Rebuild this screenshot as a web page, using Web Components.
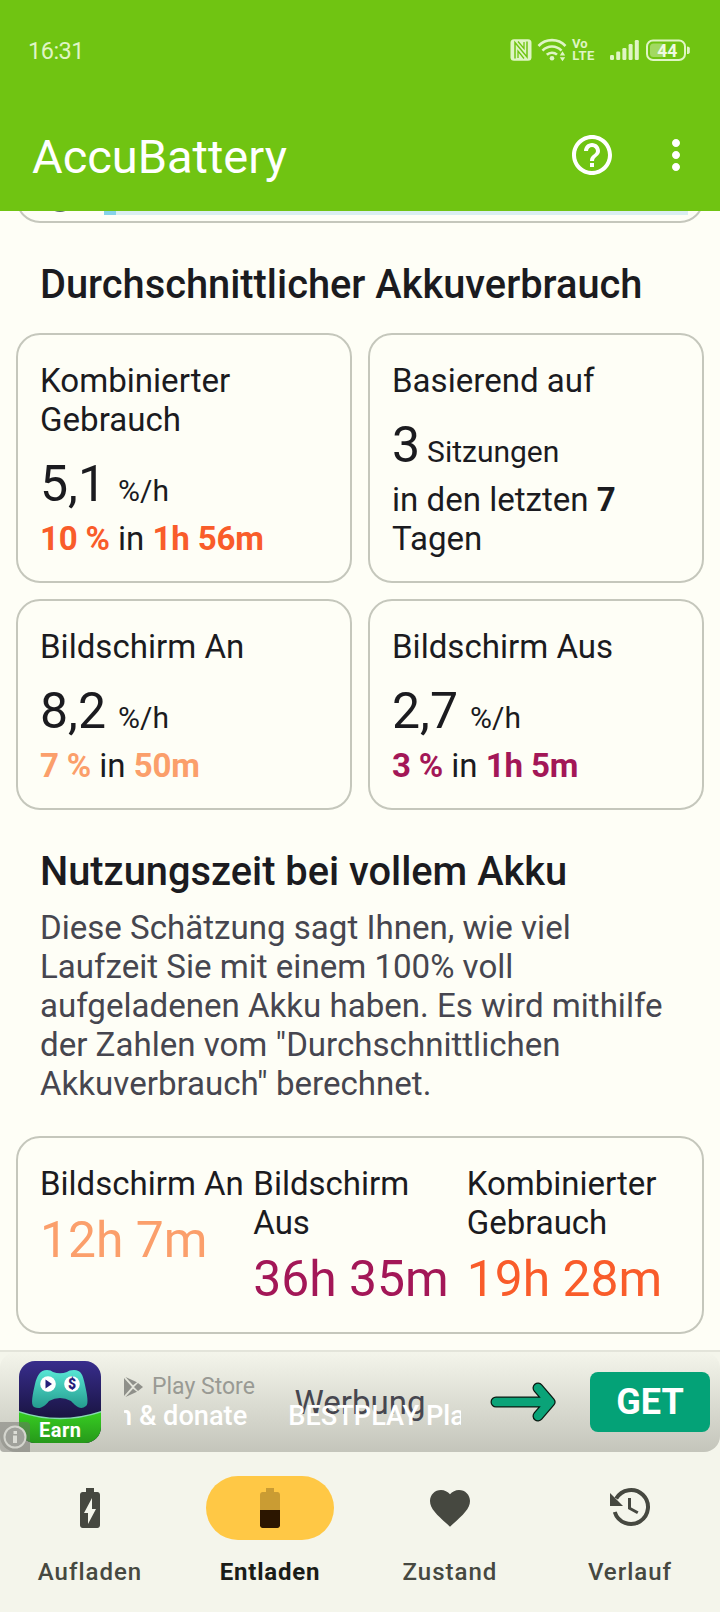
<!DOCTYPE html>
<html lang="de">
<head>
<meta charset="utf-8">
<title>AccuBattery</title>
<style>
  body {
    margin: 0;
    font-family: Roboto, "Noto Sans", sans-serif;
    color: #1b1b1f;
    background: #fefef6;
  }

  usage-card b {
    letter-spacing: -.2px;
  }
</style>
</head>
<body>
<accu-app>
  <status-bar slot="top" time="16:31"></status-bar>
  <app-bar slot="top">AccuBattery</app-bar>

  <previous-card></previous-card>

  <section-title>Durchschnittlicher Akkuverbrauch</section-title>
  <card-grid>
    <usage-card value="5,1" unit="%/h">
      <span slot="label">Kombinierter Gebrauch</span>
      <b style="color:#f95c2a">10 %</b> in <b style="color:#f95c2a">1h 56m</b>
    </usage-card>
    <usage-card value="3" unit="Sitzungen" tight>
      <span slot="label">Basierend auf</span>
      in den letzten <b>7</b> Tagen
    </usage-card>
    <usage-card value="8,2" unit="%/h">
      <span slot="label">Bildschirm An</span>
      <b style="color:#fb9f6b">7 %</b> in <b style="color:#fb9f6b">50m</b>
    </usage-card>
    <usage-card value="2,7" unit="%/h">
      <span slot="label">Bildschirm Aus</span>
      <b style="color:#a31757">3 %</b> in <b style="color:#a31757">1h 5m</b>
    </usage-card>
  </card-grid>

  <section-title>Nutzungszeit bei vollem Akku
    <span slot="text">Diese Schätzung sagt Ihnen, wie viel Laufzeit Sie mit einem 100% voll aufgeladenen Akku haben. Es wird mithilfe der Zahlen vom "Durchschnittlichen Akkuverbrauch" berechnet.</span>
  </section-title>
  <estimate-card>
    <time-estimate label="Bildschirm An" style="color:#fb9f6b">12h 7m</time-estimate>
    <time-estimate label="Bildschirm Aus" style="color:#a31757">36h 35m</time-estimate>
    <time-estimate label="Kombinierter Gebrauch" style="color:#f95c2a">19h 28m</time-estimate>
  </estimate-card>

  <ad-banner slot="bottom"></ad-banner>
  <nav-bar slot="bottom">
    <nav-item icon="charge">Aufladen</nav-item>
    <nav-item icon="discharge" active>Entladen</nav-item>
    <nav-item icon="health">Zustand</nav-item>
    <nav-item icon="history">Verlauf</nav-item>
  </nav-bar>
</accu-app>

<script>
/**
 * Base class that renders the markup of a component into an open shadow root.
 */
class AccuElement extends HTMLElement {
  /**
   * Attach the shadow root and fill it.
   */
  connectedCallback () {
    if (this.shadowRoot) return
    const template = document.createElement('template')
    template.innerHTML = this.render()
    this.attachShadow({ mode: 'open' })
    this.shadowRoot.appendChild(template.content.cloneNode(true))
  }
}

// The screen: fixed top and bottom areas, content in between.
customElements.define('accu-app', class extends AccuElement {
  render () {
    return `
      <style>
        :host { display: flex; flex-direction: column; height: 1612px; overflow: hidden; }
        header { height: 211px; background: #70c412; flex: none; }
        main { flex: 1; min-height: 0; overflow: hidden; }
        footer { flex: none; background: #f4f5eb; }
      </style>
      <header><slot name="top"></slot></header>
      <main><slot></slot></main>
      <footer><slot name="bottom"></slot></footer>
    `
  }
})

customElements.define('status-bar', class extends AccuElement {
  render () {
    return `
      <style>
        :host { display: flex; justify-content: space-between; align-items: center; height: 100px; padding: 0 30px 0 28px; box-sizing: border-box; color: #dff5c4; }
        .time { font-size: 23.5px; line-height: 28px; letter-spacing: -.5px; padding-top: 1px; }
        svg { display: block; margin-top: -1px; }
        text { font-family: Roboto, sans-serif; }
      </style>
      <span class="time">${this.getAttribute('time')}</span>
      <svg width="182" height="26" viewBox="508 36 182 26" fill="currentColor">
        <rect x="510.500" y="38.300" width="21" height="21.400" rx="3.500"/>
        <path d="M515 57.500V41.500L527 56V40.500" fill="none" stroke="#70c412" stroke-width="1.500"/>
        <path d="M518 40.500L524 47.500V41M518 57V50L524 57.500" fill="none" stroke="#70c412" stroke-width="1.300"/>
        <g fill="none" stroke="currentColor" stroke-width="2.600">
          <path d="M538.500 45A18.500 18.500 0 0 1 565.500 45"/>
          <path d="M542.500 49.600A13 13 0 0 1 561.500 49.600"/>
          <path d="M546.800 53.800A7.500 7.500 0 0 1 557 53.600"/>
        </g>
        <circle cx="552" cy="57.300" r="2.300"/>
        <path d="M559.800 54.500l2.700-4.200 2.700 4.200zM559.800 56.300h5.400l-2.700 4z"/>
        <text x="572" y="47.300" font-size="13" font-weight="700">Vo</text>
        <text x="572.300" y="59.300" font-size="13" font-weight="700" textLength="22">LTE</text>
        <rect x="610" y="54" width="4" height="5" rx="1.200"/>
        <rect x="616.200" y="50.500" width="4" height="8.500" rx="1.200"/>
        <rect x="622.400" y="47" width="4" height="12" rx="1.200"/>
        <rect x="628.600" y="43" width="4" height="16" rx="1.200"/>
        <rect x="634.800" y="39" width="4" height="20" rx="1.200"/>
        <rect x="647" y="39.500" width="38" height="19.500" rx="6" fill="none" stroke="currentColor" stroke-width="2"/>
        <rect x="650" y="42.500" width="14" height="13.500" rx="3.500" opacity=".45"/>
        <path d="M687 45.500q2.800 0 2.800 2v3.500q0 2-2.800 2z"/>
        <text x="657.300" y="55.600" font-size="17.500" font-weight="700" fill="#effae2">44</text>
      </svg>
    `
  }
})

customElements.define('app-bar', class extends AccuElement {
  render () {
    return `
      <style>
        :host { display: flex; align-items: center; height: 110px; padding: 0 20px 0 32px; box-sizing: border-box; color: #fff; }
        .title { flex: 1; font-size: 47px; line-height: 56px; padding-top: 3px; }
        svg { width: 48px; height: 48px; fill: currentColor; }
        .help { margin-right: 36px; }
      </style>
      <span class="title"><slot></slot></span>
      <svg class="help" viewBox="0 0 24 24"><path d="M11 18h2v-2h-2v2zm1-16C6.480 2 2 6.480 2 12s4.480 10 10 10 10-4.480 10-10S17.520 2 12 2zm0 18c-4.410 0-8-3.590-8-8s3.590-8 8-8 8 3.590 8 8-3.590 8-8 8zm0-14c-2.210 0-4 1.790-4 4h2c0-1.100.9-2 2-2s2 .9 2 2c0 2-3 1.750-3 5h2c0-2.250 3-2.500 3-5 0-2.210-1.790-4-4-4z"/></svg>
      <svg viewBox="0 0 24 24"><path d="M12 8c1.100 0 2-.9 2-2s-.9-2-2-2-2 .9-2 2 .9 2 2 2zm0 2c-1.100 0-2 .9-2 2s.9 2 2 2 2-.9 2-2-.9-2-2-2zm0 6c-1.100 0-2 .9-2 2s.9 2 2 2 2-.9 2-2-.9-2-2-2z"/></svg>
    `
  }
})

// Bottom edge of the card that is scrolled under the app bar.
customElements.define('previous-card', class extends AccuElement {
  render () {
    return `
      <style>
        :host { display: flex; align-items: flex-end; height: 12px; margin: 0 16px; overflow: hidden; }
        .card { flex: 1; display: flex; align-items: flex-end; height: 80px; box-sizing: border-box; border: 2px solid #c5c7bc; border-radius: 24px; padding: 0 14px 6px 28px; }
        .knob { width: 28px; height: 28px; border-radius: 50%; background: #52685f; margin: 0 30px 3px 0; }
        .bar { flex: 1; height: 32px; background: linear-gradient(to right, #86d3e8 12px, #daeef1 12px); }
      </style>
      <div class="card"><div class="knob"></div><div class="bar"></div></div>
    `
  }
})

customElements.define('section-title', class extends AccuElement {
  render () {
    return `
      <style>
        :host { display: block; padding: 37px 40px 0; }
        h2 { margin: 0; font-size: 39.8px; font-weight: 500; line-height: 50px; }
        p { margin: 11px 0 0; font-size: 33.1px; line-height: 39px; color: #46464f; }
      </style>
      <h2><slot></slot></h2>
      ${this.querySelector('[slot=text]') ? '<p><slot name="text"></slot></p>' : ''}
    `
  }
})

customElements.define('card-grid', class extends AccuElement {
  render () {
    return `
      <style>
        :host { display: grid; grid-template-columns: 1fr 1fr; gap: 16px; margin: 23px 16px 0; }
      </style>
      <slot></slot>
    `
  }
})

/**
 * Card with a label, a large value with its unit and a detail line.
 */
customElements.define('usage-card', class extends AccuElement {
  render () {
    const gap = this.hasAttribute('tight') ? 7 : 12
    return `
      <style>
        :host { display: block; box-sizing: border-box; border: 2px solid #c5c7bc; border-radius: 24px; padding: 26px 22px 23px; font-size: 33.1px; line-height: 39px; }
        .value { display: flex; align-items: baseline; gap: ${gap}px; height: 59px; margin-top: 16px; line-height: 59px; font-size: 50px; }
        .unit { font-size: 30px; line-height: 1; }
        .detail { margin-top: 5px; }
      </style>
      <div><slot name="label"></slot></div>
      <div class="value">${this.getAttribute('value')}<span class="unit">${this.getAttribute('unit')}</span></div>
      <div class="detail"><slot></slot></div>
    `
  }
})

customElements.define('estimate-card', class extends AccuElement {
  render () {
    return `
      <style>
        :host { display: grid; grid-template-columns: repeat(3, 1fr); height: 198px; margin: 33px 16px 0; box-sizing: border-box; border: 2px solid #c5c7bc; border-radius: 24px; padding: 26px 22px 0; }
      </style>
      <slot></slot>
    `
  }
})

customElements.define('time-estimate', class extends AccuElement {
  render () {
    return `
      <style>
        :host { display: block; font-size: 49.8px; line-height: 58px; white-space: nowrap; }
        .label { margin-bottom: 8px; font-size: 33px; line-height: 39px; color: #1b1b1f; white-space: normal; }
      </style>
      <div class="label">${this.getAttribute('label')}</div>
      <slot></slot>
    `
  }
})

customElements.define('ad-banner', class extends AccuElement {
  render () {
    return `
      <style>
        :host { display: block; border-top: 2px solid #e3e4da; }
        .banner { position: relative; display: flex; align-items: center; height: 100px; box-sizing: border-box; padding: 0 10px 0 19px; border-radius: 16px; background: linear-gradient(#f4f5eb, #c4c5bb); }
        .logo { flex: none; }
        .text { width: 337px; margin-left: 23px; height: 54px; margin-top: -4px; }
        .store { display: flex; align-items: center; gap: 9px; font-size: 23px; line-height: 28px; color: #999a94; }
        .marquee { display: flex; gap: 41px; overflow: hidden; white-space: nowrap; font-size: 27.2px; font-weight: 500; line-height: 32px; color: #fff; margin-top: -1px; position: relative; z-index: 1; }
        .marquee span:first-child { margin-left: -7px; }
        .arrow { margin-left: 27px; flex: none; }
        .get { margin-left: auto; width: 120px; height: 60px; border-radius: 8px; background: #04a277; color: #fff; font-size: 36px; font-weight: 700; line-height: 60px; text-align: center; }
        .placeholder { position: absolute; left: 0; right: 0; top: 31px; text-align: center; font-size: 33px; line-height: 39px; color: #46464f; }
        .info { position: absolute; left: 0; bottom: 0; }
      </style>
      <div class="banner">
        <svg class="logo" width="82" height="82" viewBox="0 0 82 82">
          <defs>
            <linearGradient id="night" x2="0" y2="1"><stop stop-color="#382d8c"/><stop offset=".7" stop-color="#191442"/></linearGradient>
            <linearGradient id="pad" x2="0" y2="1"><stop stop-color="#58e6d4"/><stop offset="1" stop-color="#249b8e"/></linearGradient>
            <linearGradient id="grass" x2="0" y2="1"><stop stop-color="#38cf22"/><stop offset="1" stop-color="#25951a"/></linearGradient>
            <clipPath id="tile"><rect width="82" height="82" rx="16"/></clipPath>
          </defs>
          <g clip-path="url(#tile)">
            <path fill="url(#night)" d="M0 0H82V82H0z"/>
            <path fill="url(#grass)" stroke="#86d9b1" stroke-width="1.500" d="M-2 50Q41 65 84 50V84H-2z"/>
            <path fill="url(#pad)" d="M28 9q4 0 6 2 7 2.500 14 0 2-2 7-2c7 0 9 5 11 15 2 9 4 19 1 21-6 5-11-1-15-5q-11-6-22 0c-4 5-9 9-15 6-4-2-1-14 1-23 2-8 5-14 12-14z"/>
            <circle cx="29" cy="23" r="7.800" fill="#fff"/><path d="M26.500 18.500v9l6.500-4.500z" fill="#25207a"/>
            <circle cx="53" cy="23" r="7.800" fill="#fff"/>
          </g>
          <text x="53" y="28" font-family="Roboto" font-size="14" font-weight="900" text-anchor="middle" fill="#25207a">$</text>
          <text x="41" y="75.500" font-family="Roboto" font-size="20" font-weight="700" text-anchor="middle" textLength="42" fill="#fff">Earn</text>
        </svg>
        <div class="text">
          <div class="store">
            <svg width="19" height="22" viewBox="0 0 19 22" fill="#8f908a"><path d="M1.500 1L9 9.300 13 6.300zM0 2V20L8 11zM14 7L10 11l4 4 5-4zM1.500 21L9 12.700l4 3z"/></svg>
            Play Store
          </div>
          <div class="marquee"><span>n &amp; donate</span><span>BESTPLAY Play</span></div>
        </div>
        <svg class="arrow" width="70" height="42" viewBox="0 0 70 42" fill="none" stroke-linecap="round" stroke-linejoin="round">
          <path d="M8 21H58M50 7L62 21 50 35" stroke="#0b1a12" stroke-width="11"/>
          <path d="M8 21H58M50 7L62 21 50 35" stroke="#0aa378" stroke-width="8.500"/>
        </svg>
        <div class="get">GET</div>
        <div class="placeholder">Werbung</div>
        <svg class="info" width="30" height="30" viewBox="0 0 30 30">
          <path d="M0 0H26q4 0 4 4V30H4q-4 0-4-4z" fill="#6f706b" fill-opacity=".5"/>
          <circle cx="15" cy="15" r="10.500" fill="#a0a19b" stroke="#d4d5ce" stroke-width="2"/>
          <path d="M13.500 9h3.500v3h-3.500zM13 13.500h4V21h-4z" fill="#dcddd6"/>
        </svg>
      </div>
    `
  }
})

customElements.define('nav-bar', class extends AccuElement {
  render () {
    return `
      <style>
        :host { display: grid; grid-template-columns: repeat(4, 1fr); height: 160px; }
      </style>
      <slot></slot>
    `
  }
})

const navIcons = {
  charge: '<path d="M15.670 4H14V2h-4v2H8.330C7.600 4 7 4.600 7 5.330v15.330C7 21.400 7.600 22 8.330 22h7.330c.74 0 1.340-.6 1.340-1.330V5.330C17 4.600 16.400 4 15.670 4zM11 20v-5.500H9L13 7v5.500h2L11 20z"/>',
  discharge: '<path fill-opacity=".25" d="M17 5.330C17 4.600 16.400 4 15.670 4H14V2h-4v2H8.330C7.600 4 7 4.600 7 5.330V13h10V5.330z"/><path d="M7 13v7.670C7 21.400 7.600 22 8.330 22h7.330c.74 0 1.340-.6 1.340-1.330V13H7z"/>',
  health: '<path d="M12 21.350l-1.450-1.320C5.400 15.360 2 12.280 2 8.500 2 5.420 4.420 3 7.500 3c1.740 0 3.410.81 4.500 2.090C13.090 3.810 14.760 3 16.500 3 19.580 3 22 5.420 22 8.500c0 3.780-3.400 6.860-8.550 11.540L12 21.350z"/>',
  history: '<path d="M2 4.500V11h6.500z"/><path d="M4.370 14A8.500 8.500 0 1 0 5.100 7.300" fill="none" stroke="currentColor" stroke-width="2"/><path d="M11.750 7V12.100L15.900 14.400" fill="none" stroke="currentColor" stroke-width="1.500"/>'
}

customElements.define('nav-item', class extends AccuElement {
  render () {
    return `
      <style>
        :host { display: flex; flex-direction: column; align-items: center; padding-top: 24px; color: #464840; font-size: 24px; line-height: 32px; font-weight: 500; letter-spacing: 1px; }
        :host([active]) { color: #1a1c17; font-weight: 700; letter-spacing: .8px; }
        .pill { display: flex; align-items: center; justify-content: center; width: 128px; height: 64px; border-radius: 32px; margin-bottom: 16px; }
        :host([active]) .pill { background: #ffc845; color: #2c1600; }
        svg { width: 48px; height: 48px; fill: currentColor; }
      </style>
      <div class="pill"><svg viewBox="0 0 24 24">${navIcons[this.getAttribute('icon')]}</svg></div>
      <slot></slot>
    `
  }
})
</script>
</body>
</html>
